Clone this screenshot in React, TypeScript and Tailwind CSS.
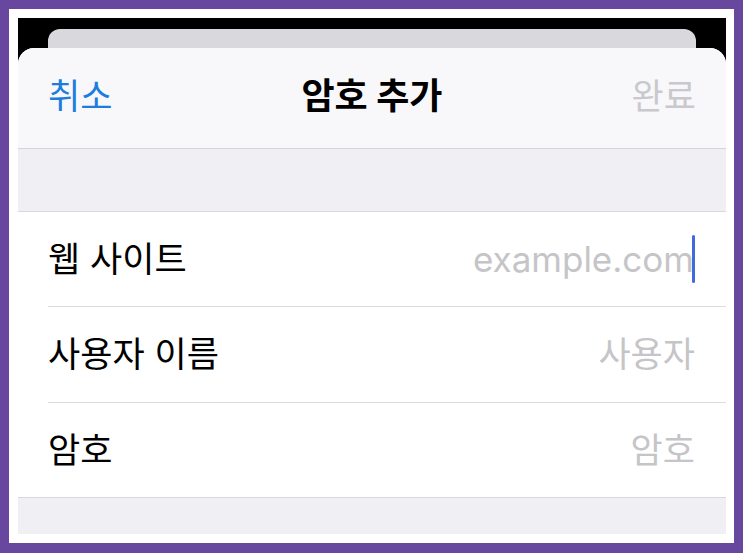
import React from 'react'

const rows = [
  { label: '웹 사이트', placeholder: 'example.com', focused: true, h: 'h-[95px]' },
  { label: '사용자 이름', placeholder: '사용자', h: 'h-[96px]' },
  { label: '암호', placeholder: '암호', h: 'h-[94px]' },
]

export default function App() {
  return (
    <div className="w-[743px] h-[553px] bg-[#68479f] pt-[9px] pl-[9px] pr-[9px] pb-[10px] font-[Inter,'Noto_Sans_CJK_KR',sans-serif]">
      <div className="h-full bg-white pt-[9px] pl-[9px] pr-[8px] pb-[9px]">
        <div className="h-full bg-black flex flex-col overflow-hidden">
          <div className="mt-[11px] mx-[30px] h-[19px] shrink-0 rounded-t-[12px] bg-[#d9d9dd]" />
          <div className="flex-1 flex flex-col rounded-t-[16px] overflow-hidden bg-[#efeff4]">
            <div className="h-[101px] shrink-0 bg-[#f8f8fa] border-b border-[#d6d6da] flex items-center justify-between pl-[30px] pr-[30px] pb-[4px]">
              <span className="text-[35px] text-[#1c7ddf] w-[130px]">취소</span>
              <span className="text-[36px] font-bold text-black">암호 추가</span>
              <span className="text-[35px] text-[#c9c9cd] w-[130px] text-right">완료</span>
            </div>
            <div className="h-[63px] shrink-0 border-b border-[#d9d9dc]" />
            <div className="bg-white border-b border-[#d9d9dc]">
              {rows.map((r, i) => (
                <div key={i} className="pl-[30px]">
                  <div className={`${r.h} flex items-center justify-between pr-[31px] ${i < rows.length - 1 ? 'border-b border-[#dcdcde]' : ''}`}>
                    <span className="text-[35px] text-black">{r.label}</span>
                    <span className="flex items-center">
                      <span className="text-[35px] text-[#c5c5c8]">{r.placeholder}</span>
                      {r.focused && <span className="w-[3px] h-[48px] bg-[#3f6bdc] rounded-full -ml-[2px]" />}
                    </span>
                  </div>
                </div>
              ))}
            </div>
            <div className="flex-1" />
          </div>
        </div>
      </div>
    </div>
  )
}
